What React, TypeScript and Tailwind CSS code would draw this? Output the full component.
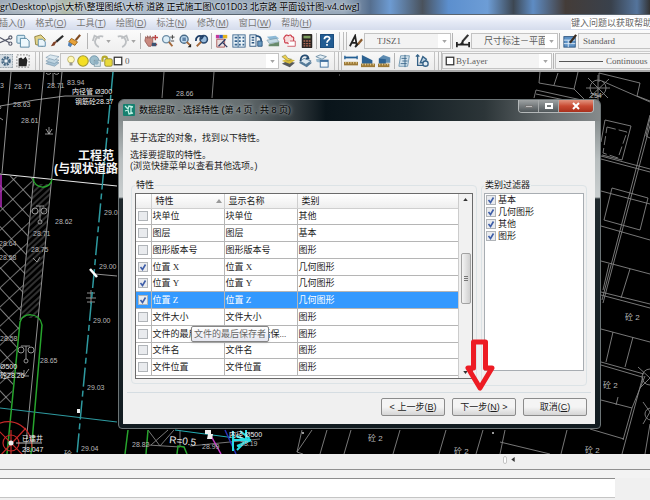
import React, { useState } from "react";

const cjk = 'font-["Liberation_Sans","Noto_Sans_CJK_SC",sans-serif]';

/* ---------- toolbar glyphs ---------- */

const glyphs: Record<string, React.ReactNode> = {
  cut: (
    <g fill="none" stroke="#55596a" strokeWidth="1.3">
      <path d="M1 4 L12 10 M1 10 L12 5" />
      <circle cx="13" cy="4" r="1.8" />
      <circle cx="13" cy="11" r="1.8" />
    </g>
  ),
  copy: (
    <g stroke="#4d7f9c" fill="#d7ecf6">
      <rect x="1" y="1.500" width="9" height="9" rx="1" />
      <path d="M5 5h7l3 3v7H5z" fill="#eef8fc" />
    </g>
  ),
  paste: (
    <g stroke="#8a7a35">
      <path d="M2 3l7-2 5 5-3 8-8-2z" fill="#e3d489" />
      <path d="M6 6h5l3 3v5H6z" fill="#eaf4fa" stroke="#5285a8" />
    </g>
  ),
  brush: (
    <g>
      <path d="M15 2L7 9" stroke="#2b2b2b" strokeWidth="2.500" />
      <path d="M8 8l-3 5-4 1 3-5z" fill="#7d3f25" />
    </g>
  ),
  match: (
    <g>
      <path d="M15 1l-5 6" stroke="#7e481e" strokeWidth="2.500" />
      <path d="M5 5l7 4-3 4-7-4z" fill="#e8a33a" stroke="#94601c" />
      <path d="M2 9l4 3-2 3-3-2z" fill="#4f80b8" />
    </g>
  ),
  undo: <path d="M9 15C5 13 3 9 6 5M2 8l2-6 6 3M6 5c2-2 5-3 8-2" fill="none" stroke="#bcbfc2" strokeWidth="2" />,
  redo: <path d="M7 15c4-2 6-6 3-10M14 8l-2-6-6 3M10 5C8 3 5 2 2 3" fill="none" stroke="#bcbfc2" strokeWidth="2" />,
  pan: (
    <g>
      <path d="M2 3l2 2 0-3 2 3 1-3 1 3 2-2v7l-2 4H5L1 8z" fill="#c9897f" stroke="#995e58" />
      <path d="M13 1v6M10 4h6M9 12h6" stroke="#b44" strokeWidth="1.500" />
      <rect x="9" y="10" width="5" height="4" fill="#3b5272" />
    </g>
  ),
  zoom: (
    <g fill="none">
      <circle cx="6" cy="6" r="4.200" stroke="#6c8ca5" strokeWidth="1.500" fill="#dcedf7" />
      <path d="M9 9l4 5" stroke="#a5693a" strokeWidth="2.200" />
      <path d="M13 1v5M10.500 3.500h5M11 8h4" stroke="#333" />
    </g>
  ),
  zoomWin: (
    <g fill="none">
      <circle cx="7" cy="6" r="4.600" stroke="#486a88" strokeWidth="1.500" fill="#bcd7ec" />
      <path d="M5 4h4v4H5z" fill="#5f83a8" />
      <path d="M10 9l4 4" stroke="#a5693a" strokeWidth="2.200" />
      <path d="M15 11v4h-4z" fill="#222" />
    </g>
  ),
  zoomPrev: (
    <g fill="none">
      <circle cx="10" cy="6" r="4.200" stroke="#2a4a70" strokeWidth="1.800" fill="#98bbdc" />
      <path d="M7 9l-5 5" stroke="#a5693a" strokeWidth="2.200" />
      <path d="M1 8c0-5 3-7 8-5l-2 3" stroke="#1e3e66" strokeWidth="2" />
    </g>
  ),
  props: (
    <g>
      <path d="M1 1h4v4H1z" fill="#c3379c" />
      <path d="M5 1h4v4H5z" fill="#2e59c8" />
      <path d="M9 1h5v4H9z" fill="#e2b321" />
      <path d="M2 6h9v9H2z" fill="#e9dede" stroke="#a55" />
      <path d="M4 14l8-8M8 9l6 6" stroke="#2b3a63" strokeWidth="1.500" />
    </g>
  ),
  design: (
    <g>
      <rect x="1" y="1" width="14" height="14" fill="#e9f2f8" stroke="#35628c" />
      <path d="M3 4h3M3 8h3M3 12h3M8 4h2M12 4h2M8 8h2M12 8h2M8 12h2M12 12h2" stroke="#35628c" strokeWidth="2" />
      <path d="M7 1v14" stroke="#35628c" />
    </g>
  ),
  palette: (
    <g>
      <rect x="1" y="1" width="7" height="13" fill="#eef5fa" stroke="#29527c" />
      <path d="M3 4h3M3 7h3M3 10h3" stroke="#29527c" strokeWidth="1.500" />
      <path d="M8 2c4 0 6 2 6 6" fill="none" stroke="#29527c" strokeWidth="2" />
      <path d="M10 8h5v6h-5z" fill="#6a9ac1" stroke="#29527c" />
    </g>
  ),
  sheets: (
    <g>
      <path d="M1 3l10-1 4 3-10 2z" fill="#8db9d6" />
      <path d="M1 7l11-2 3 4-11 2z" fill="#c4dae4" stroke="#68899a" strokeWidth=".6" />
      <path d="M3 12l12-3v5H3z" fill="#688a6b" />
    </g>
  ),
  markup: (
    <g>
      <path d="M2 3q2-3 4-1 3-2 4 1 3 0 2 4 1 4-3 3-2 3-4 0-4 1-3-3-2-2 0-4z" fill="#f6dcdc" stroke="#cd3e4c" strokeWidth="1.300" />
      <path d="M8 8h6v6H5" fill="#fff" stroke="#c9505c" />
    </g>
  ),
  calc: (
    <g>
      <rect x="2" y="0" width="12" height="16" rx="1" fill="#2a2523" />
      <rect x="4" y="2" width="8" height="3" fill="#7c9c5e" />
      <path d="M4 8h8M4 11h8M4 13.500h8" stroke="#b66b57" strokeWidth="1.500" strokeDasharray="2 1" />
    </g>
  ),
  help: (
    <g>
      <rect x="0" y="0" width="16" height="16" rx="1" fill="#225c92" stroke="#123c68" />
      <path d="M5 6c0-4 6-4 6-1 0 2-3 2-3 5M8 11.500v2" fill="none" stroke="#fff" strokeWidth="2" />
    </g>
  ),
  textStyle: (
    <g fill="none">
      <path d="M1 14L7 2l2 12M3 10h6" stroke="#222" strokeWidth="2" />
      <path d="M15 6l-5 6" stroke="#8a5a2c" strokeWidth="2.500" />
      <path d="M10 11l-3 4" stroke="#222" strokeWidth="2" />
    </g>
  ),
  dimStyle: (
    <g>
      <path d="M1 9v6M15 9v6M1 12h14" stroke="#222" strokeWidth="2" />
      <path d="M14 1L7 9" stroke="#333" strokeWidth="2.500" />
      <path d="M8 7l-4 5h5z" fill="#222" />
    </g>
  ),
  tableStyle: (
    <g>
      <rect x="1" y="3" width="13" height="12" fill="#5f93c7" stroke="#29527c" />
      <path d="M1 7h13M1 11h13M6 7v8" stroke="#e4eff8" />
      <path d="M15 1L8 10" stroke="#3a2c20" strokeWidth="2.500" />
    </g>
  ),
  gear: (
    <g>
      <rect x="0" y="0" width="16" height="16" fill="#d5dde3" stroke="#5d6a74" strokeDasharray="2 1" />
      <circle cx="8" cy="8" r="4" fill="none" stroke="#466884" strokeWidth="3" strokeDasharray="2.200 1" />
      <circle cx="8" cy="8" r="2.500" fill="#f0f5f8" stroke="#466884" />
    </g>
  ),
  region: (
    <g>
      <rect x="1" y="1" width="14" height="14" fill="none" stroke="#777" strokeDasharray="2 1.500" />
      <path d="M3 5l3-1 2 2 3-3 2 4-1 7H3z" fill="#242424" />
    </g>
  ),
  layers: (
    <g stroke="#6b8ba2" strokeWidth=".6">
      <path d="M1 11l5-3 10 2-5 4z" fill="#a6c2d4" />
      <path d="M1 8l5-3 10 2-5 4z" fill="#bed4e1" />
      <path d="M1 4l5-3 10 2-5 4z" fill="#dbe8f0" />
    </g>
  ),
  layerGold: (
    <g>
      <path d="M1 11l6-3 9 2-6 5z" fill="#55585a" />
      <path d="M1 8l6-3 9 2-6 4z" fill="#d8bc3c" />
      <path d="M1 3l4-2 3 4 4 1-4 2z" fill="#eecf4f" stroke="#72773b" strokeWidth=".6" />
    </g>
  ),
  layerBack: (
    <g>
      <path d="M1 10l6-3 9 3-6 5z" fill="#547997" />
      <path d="M2 8l5-3 8 3-6 4z" fill="#dde8ef" stroke="#547997" />
      <path d="M3 8c0-8 8-8 9-3l-3 0" fill="none" stroke="#274d73" strokeWidth="2" />
    </g>
  ),
  layerState: (
    <g>
      <path d="M1 3l5-2 7 2-5 3z" fill="#e2edf4" stroke="#6b8ba2" />
      <path d="M1 6l5-1 2 5-6-1z" fill="#99b9ce" />
      <rect x="6" y="7" width="9" height="8" fill="#f1f7fb" stroke="#376a9b" />
      <path d="M6 8h9" stroke="#376a9b" strokeWidth="2" />
    </g>
  ),
  distance: (
    <g>
      <path d="M1 4h14" stroke="#225e94" strokeWidth="2" />
      <path d="M1 2v4M15 2v4" stroke="#225e94" strokeWidth="1.500" />
      <rect x="0" y="9" width="16" height="4" fill="#9b7836" />
      <path d="M2 9v2M5 9v2M8 9v2M11 9v2M14 9v2" stroke="#f3dca0" />
    </g>
  ),
  area: (
    <g>
      <path d="M1 1l12 6v4H1z" fill="#2d6292" />
      <rect x="0" y="11" width="16" height="4" fill="#9b7836" />
      <path d="M2 11v2M5 11v2M8 11v2M11 11v2M14 11v2" stroke="#f3dca0" />
    </g>
  ),
  volume: (
    <g>
      <path d="M1 5l5-4 8 3v6H1z" fill="#5e8cb2" />
      <path d="M1 5l8 1v5H1z" fill="#2d6292" />
      <rect x="0" y="11" width="13" height="4" fill="#9b7836" />
      <path d="M2 11v2M5 11v2M8 11v2M11 11v2" stroke="#f3dca0" />
    </g>
  ),
  list: (
    <g>
      <path d="M3 2h10l-2 12H1z" fill="#d3e2ec" stroke="#6992ae" />
      <path d="M4 5h6M5 8h6M3 11h7M8 1v14" stroke="#356287" />
    </g>
  ),
  locate: (
    <g fill="none" stroke="#356287" strokeWidth="1.500">
      <path d="M3 1v12h12M1 3l2-2 2 2" />
      <path d="M6 10l3-7 4 3-2 4z" fill="#bcd3e4" />
      <circle cx="12" cy="11" r="3" fill="#e4eef5" />
    </g>
  ),
  bulb: (
    <g>
      <circle cx="8" cy="6" r="4.500" fill="#fff9b8" stroke="#b3a655" />
      <path d="M6 10h4v4H6z" fill="#9a9a94" />
    </g>
  ),
  sun: <circle cx="8" cy="8" r="7" fill="#f4df24" stroke="#a39a33" strokeWidth="1.500" />,
  freeze: (
    <g>
      <circle cx="7" cy="7" r="6" fill="#9ebfcd" stroke="#648ba0" />
      <rect x="7" y="7" width="8" height="8" fill="#dae6ea" stroke="#7593a0" />
      <circle cx="10" cy="10" r="3" fill="#8eb0c2" />
    </g>
  ),
  lock: (
    <g>
      <path d="M2 9V5c0-4 6-4 6 0" fill="none" stroke="#b5a92c" strokeWidth="3" />
      <rect x="5" y="5" width="10" height="10" rx="2" fill="#e8d93a" stroke="#817a2c" />
    </g>
  ),
  swatch: <rect x="2" y="2" width="12" height="12" fill="#fff" stroke="#333" strokeWidth="2" />,
};

function Glyph({ name, size = "size-3.5" }: { name: string; size?: string }) {
  return (
    <svg viewBox="0 0 16 16" className={`${size} shrink-0`} aria-hidden="true">
      {glyphs[name]}
    </svg>
  );
}

function Tool({ name, label }: { name: string; label: string }) {
  return (
    <button type="button" aria-label={label} className="flex h-4 w-[17px] shrink-0 items-center justify-center">
      <Glyph name={name} />
    </button>
  );
}

function Caret() {
  return (
    <svg viewBox="0 0 6 4" className="h-[3px] w-[5px] shrink-0" aria-hidden="true">
      <path d="M0 0h6L3 4z" fill="#a5a5a5" />
    </svg>
  );
}

function HistoryTool({ name, label }: { name: string; label: string }) {
  return (
    <div className="flex w-[25px] shrink-0 items-center">
      <Tool name={name} label={label} />
      <Caret />
    </div>
  );
}

const Sep = () => <span className="mx-px h-4 w-px shrink-0 bg-[#b4b4b4]" />;

const Grip = () => (
  <span className="ml-1 flex h-[18px] shrink-0 gap-0.5 border-l border-[#c4c4c4] pl-[3px]">
    <span className="w-px bg-[#bdbdbd]" />
    <span className="w-px bg-[#bdbdbd]" />
  </span>
);

function Combo({ label, value, width, pad, children }: { label: string; value: string; width: string; pad: string; children?: React.ReactNode }) {
  return (
    <div className={`grid h-4 items-center border border-[#c3c3c3] bg-[#f3f3f3] ${width}`}>
      <select
        aria-label={label}
        className={`col-start-1 row-start-1 h-full w-full min-w-0 appearance-none bg-transparent font-["Liberation_Serif","Noto_Sans_CJK_SC",serif] text-[9px] leading-3 text-[#5c5c5c] ${pad}`}
      >
        <option>{value}</option>
      </select>
      <div className="pointer-events-none col-start-1 row-start-1 flex h-full items-center pl-1">
        {children}
        <span className="ml-auto flex h-full w-3 items-center justify-center bg-white">
          <Caret />
        </span>
      </div>
    </div>
  );
}

/* ---------- drawing area ---------- */

const streetLines = [
  "M540 72L539 83L574 89L578 72M558 73L554 85M574 89L588 103M536 90L600 104M536 90L534 98M536 94L598 107",
  "M599 73L640 83L637 96L650 101M602 81L650 102M599 73V82M650 118L646 136L650 138",
  "M605 120L631 126L622 160L602 155M605 120L601 142",
  "M601 156L650 169M601 159L650 172M650 115L602 300M652 118L603 303",
  "M612 188L648 198L640 230L604 220ZM601 191L650 204M601 226L650 240",
  "M601 261L650 274M630 269L621 298M601 292L650 304M601 295L650 308M609 264L603 290",
  "M601 329L650 342M613 332L606 362M633 337L625 367M601 362L644 374M601 365L642 377",
  "M601 400L632 408M618 397L616 405M643 376L622 454M645 376L632 408M590 429L624 439M632 408L623 440",
  "M483 430L476 454M505 430L500 454M500 442L550 454M567 430L561 454M650 424L645 454",
];

const lowerLines = [
  "M302 430L297 452L312 430M297 452L303 454M327 430L320 454M351 430L344 454M400 430L393 454M446 430L439 454",
  "M148 430L160 446L174 430M168 430L151 445M148 445L180 447M180 430V446M190 446L260 439",
];

const spots: [number, number, string][] = [
  [-4, 88, "13"], [14, 89, "28.71"], [47, 88, "28.71"], [67, 85, "83.94"], [13, 107, "28.63"], [21, 123, "28.61"],
  [55, 224, "28.62"], [104, 215, "29.03"], [99, 269, "29.00"], [93, 323, "29.00"], [40, 363, "28.65"],
  [87, 390, "29.03"], [81, 451, "29.04"], [-1, 246, "28.64"], [-1, 260, "28.58"], [33, 236, "28.71"],
  [31, 252, "28.75"], [0, 341, "28.58"], [176, 96, "28.66"], [132, 447, "28.82"], [202, 449, "28.99"], [240, 446, "28.19"],
];

function Drawing() {
  return (
    <svg
      viewBox="0 72 650 382"
      preserveAspectRatio="xMinYMin slice"
      className='absolute inset-0 h-full w-full font-["Liberation_Sans","Noto_Sans_CJK_SC",sans-serif]'
      aria-hidden="true"
    >
      <defs>
        <pattern id="cross" width="14" height="14" patternUnits="userSpaceOnUse" patternTransform="rotate(47)">
          <path d="M0 0H14M0 0V14" stroke="#a8a8a8" strokeWidth="1.300" />
        </pattern>
        <pattern id="slant" width="9" height="9" patternUnits="userSpaceOnUse" patternTransform="rotate(-43)">
          <path d="M0 1H9M0 5H9" stroke="#8a8a8a" strokeWidth=".7" />
        </pattern>
      </defs>
      <path d="M0 175L33 178L20 320L11 404L0 404Z" fill="url(#cross)" />
      <path d="M33 184L51 184L38 318L21 318Z" fill="url(#slant)" />

      <g fill="none" stroke="#b5b5b5" strokeWidth=".8">
        <path d="M11 72L2 173M44 72L20 320M62 72L25 454M0 106L35 100L65 96H103" />
        <path d="M46 73a3 3 0 0 0 5 0M54 73a3 3 0 0 0 5 0M53 73V85M0 106a2 2 0 0 1 0 3M0 118l3 2" />
        <path d="M45 134H53M49 127V134M46 129L49 134L52 129" />
        <circle cx="35" cy="211" r="3" />
        <circle cx="44" cy="211" r="3" />
        <path d="M36 206H44M40 206V220M33 258l4 4 3-5" />
        <circle cx="40" cy="222" r="2" />
        <circle cx="21" cy="350" r="3" />
        <circle cx="31" cy="350" r="3" />
        <path d="M21 346H30M26 346V359M0 373H22M24 370V376H29M24 376L29 369" />
        <circle cx="26" cy="361" r="2" />
        <path d="M87 293H95M86 298H96M87 302H95M91 290V304" />
        <path d="M95 274L117 276" />
      </g>
      <path d="M0 174L117 186" stroke="#e7e7e7" />
      <path d="M1 175V207" stroke="#b42bbc" strokeWidth="1.500" />
      <path d="M113 72L77 454" stroke="#2e9aa0" strokeWidth="1.500" strokeDasharray="19 4 6 4" />
      <path d="M0 408L117 422" stroke="#2e9aa0" strokeWidth="1.200" />
      <path d="M33 178C34 190 51 190 52 179M7 454L20 322C22 312 40 312 42 325L31 454" fill="none" stroke="#27a52d" strokeWidth="1.500" />
      <g fill="none" stroke="#c62828" strokeWidth="1.200">
        <circle cx="11" cy="443" r="8" />
        <path d="M-5 425C14 416 32 427 32 448M-4 428L26 458M26 428L-2 458M11 430V454" />
      </g>
      <circle cx="11" cy="443" r="2.500" fill="#eee" />
      <path d="M16 443H42" stroke="#bbb" />
      <path d="M90 269L97 277" stroke="#fff" strokeWidth="2.500" />
      <path d="M77 409h3v4h-3z" fill="#eee" />

      <g fill="none" stroke="#858585" strokeWidth=".9">
        {[...streetLines, ...lowerLines].map((d) => (
          <path key={d} d={d} />
        ))}
        <path d="M164 72L162 98M214 72L212 98M339 75h1" />
        <path d="M607 127L627 132L618 158L603 153Z" strokeDasharray="9 3" />
        <circle cx="598" cy="88" r="8" />
        <path d="M588 78L608 98M609 79L589 98M598 75V102M586 88H610" />
        <circle cx="650" cy="377" r="8" />
        <circle cx="651" cy="414" r="6" />
        <path d="M638 367L650 378L640 388M643 402L650 412L643 424" />
      </g>
      <circle cx="493" cy="433" r="1" fill="#ccc" />
      <circle cx="303" cy="433" r="1" fill="#ccc" />

      <path d="M128 430L125 454M148 430L146 454M177 454L178 446L184 447L187 454" fill="none" stroke="#27a52d" strokeWidth="1.500" />
      <path d="M175 430L235 438" stroke="#25aeb4" />
      <path d="M210 434L221 454" stroke="#c63cc8" strokeWidth="1.500" />
      <path d="M225 430L236 454" stroke="#2731b8" strokeWidth="1.500" />
      <path d="M205 430h6v4h-6zM208 434h5l-1 5h-5z" fill="#eee" />
      <path d="M233 431v20M233 440h18M240 431l9 7-11 9M236 436l13 5-12 5M246 430v12M237 450l11-11" stroke="#27dce4" strokeWidth="2" fill="none" />

      <g fill="#b9b9b9" fontSize="7">
        {spots.map(([x, y, t]) => (
          <text key={`${x}-${y}`} x={x} y={y}>{t}</text>
        ))}
        <text x="590" y="98">254</text>
      </g>
      <g fill="#f2f2f2" fontSize="7">
        <text x="72" y="94">内径管 Ø300</text>
        <text x="75" y="104">钢筋砼28.37</text>
        <text x="0" y="369">Ø500</text>
        <text x="0" y="378">砼28.26</text>
        <text x="22" y="441">已建井</text>
        <text x="22" y="452">28.047</text>
        <text x="229" y="437">内径 Ø500</text>
      </g>
      <g fill="#bdbdbd" fontSize="8">
        <text x="625" y="320">砼 2</text>
        <text x="603" y="388">砼 2</text>
        <text x="585" y="453">砼 2</text>
        <text x="368" y="441">砼 2</text>
        <text x="454" y="454">砼 2</text>
        <text x="64" y="457">砼</text>
      </g>
      <text x="169" y="443" fill="#ececec" fontSize="10" transform="rotate(6 169 443)">R=0.5</text>
      <g fill="#f5f5f5" fontSize="12" fontWeight="700">
        <text x="78" y="160">工程范</text>
        <text x="54" y="173">(与现状道路</text>
      </g>
    </svg>
  );
}

/* ---------- wizard ---------- */

function Tick({ checked, onChange, label, id }: { checked: boolean; onChange: () => void; label?: string; id?: string }) {
  return (
    <span className="inline-grid shrink-0 align-middle">
      <input
        id={id}
        type="checkbox"
        checked={checked}
        onChange={onChange}
        aria-label={label}
        className="col-start-1 row-start-1 size-2.5 appearance-none border border-[#b0b4b8] bg-[#e9ebee]"
      />
      {checked && (
        <svg viewBox="0 0 10 10" className="pointer-events-none col-start-1 row-start-1 size-2.5" aria-hidden="true">
          <path d="M2.500 5L4.500 7.500L7.500 2.500" fill="none" stroke="#3e5ea8" strokeWidth="1.600" />
        </svg>
      )}
    </span>
  );
}

const initialRows = [
  { name: "块单位", kind: "其他", on: false },
  { name: "图层", kind: "基本", on: false },
  { name: "图形版本号", kind: "图形", on: false },
  { name: "位置 X", kind: "几何图形", on: true },
  { name: "位置 Y", kind: "几何图形", on: true },
  { name: "位置 Z", kind: "几何图形", on: true },
  { name: "文件大小", kind: "图形", on: false },
  { name: "文件的最后保存者", display: "文件的最后保...", kind: "图形", on: false },
  { name: "文件名", kind: "图形", on: false },
  { name: "文件位置", kind: "图形", on: false },
];

function PropertyTable() {
  const [rows, setRows] = useState(initialRows);
  const toggle = (i: number) => setRows(rows.map((r, j) => (j === i ? { ...r, on: !r.on } : r)));
  return (
    <div className="flex h-[186px] overflow-hidden border border-[#6a6a6a] bg-white">
      <div className="min-w-0 flex-1 overflow-hidden">
        <table className='h-[182px] w-full table-fixed border-collapse text-left font-["Liberation_Serif","Noto_Sans_CJK_SC",serif]'>
          <colgroup>
            <col className="w-[15px]" />
            <col className="w-[73px]" />
            <col className="w-[73px]" />
            <col />
          </colgroup>
          <thead>
            <tr className="h-3.5 bg-linear-to-b from-white to-[#eeeeee]">
              <th className="border-r border-b border-[#cfcfcf] p-0" />
              <th className="border-r border-b border-[#cfcfcf] p-0 pl-1 font-normal">
                <span className="flex items-center justify-between pr-0.5">
                  特性
                  <svg viewBox="0 0 6 4" className="h-1 w-1.5" aria-hidden="true">
                    <path d="M0 4h6L3 0z" fill="#9a9a9a" />
                  </svg>
                </span>
              </th>
              <th className="border-r border-b border-[#cfcfcf] p-0 pl-1 font-normal">显示名称</th>
              <th className="border-b border-[#cfcfcf] p-0 pl-1 font-normal">类别</th>
            </tr>
          </thead>
          <tbody>
            {rows.map((r, i) => (
              <tr key={r.name} className={i === 5 ? "bg-[#3399ff] text-white" : ""}>
                <td className="border-r border-b border-[#b5b5b5] p-0 text-center leading-none">
                  <Tick checked={r.on} onChange={() => toggle(i)} label={r.name} />
                </td>
                <td className="overflow-hidden border-r border-b border-[#b5b5b5] p-0 pl-px whitespace-nowrap">{r.name}</td>
                <td className="overflow-hidden border-r border-b border-[#b5b5b5] p-0 pl-px whitespace-nowrap">{r.display ?? r.name}</td>
                <td className="border-b border-[#b5b5b5] p-0 pl-px">{r.kind}</td>
              </tr>
            ))}
          </tbody>
        </table>
      </div>
      <div className="flex w-3.5 flex-col items-center border-l border-[#cccccc] bg-[#f1f1f1] py-1">
        <svg viewBox="0 0 6 4" className="h-[3px] w-[5px] shrink-0" aria-hidden="true">
          <path d="M0 4h6L3 0z" fill="#333" />
        </svg>
        <div className="mt-[52px] flex h-[51px] w-2.5 flex-col items-center justify-center gap-px rounded-xs border border-[#a2a2a2] bg-linear-to-r from-[#f4f4f4] to-[#cfcfcf]">
          <span className="h-px w-1 bg-[#777]" />
          <span className="h-px w-1 bg-[#777]" />
          <span className="h-px w-1 bg-[#777]" />
        </div>
        <svg viewBox="0 0 6 4" className="mt-auto h-[3px] w-[5px] shrink-0" aria-hidden="true">
          <path d="M0 0h6L3 4z" fill="#333" />
        </svg>
      </div>
    </div>
  );
}

function CategoryFilter() {
  const names = ["基本", "几何图形", "其他", "图形"];
  const [off, setOff] = useState<string[]>([]);
  return (
    <div className="h-[178px] border border-[#a8adb2] bg-white px-px">
      {names.map((n, i) => (
        <div key={n} className="flex h-3 items-center gap-0.5">
          <Tick
            id={`category-${i}`}
            checked={!off.includes(n)}
            onChange={() => setOff(off.includes(n) ? off.filter((o) => o !== n) : [...off, n])}
          />
          <label htmlFor={`category-${i}`}>{n}</label>
        </div>
      ))}
    </div>
  );
}

function WizardButton({ children }: { children: React.ReactNode }) {
  return (
    <button
      type="button"
      className="flex h-[18px] w-16 items-center justify-center rounded-xs border border-[#8b8b8b] bg-linear-to-b from-[#f4f4f4] from-50% to-[#d5d5d5] whitespace-pre"
    >
      {children}
    </button>
  );
}

function Wizard() {
  return (
    <section
      aria-label="数据提取"
      className={`absolute top-[27px] left-[118px] w-[483px] rounded-t-md rounded-b-sm border border-[#6c7476] bg-[linear-gradient(180deg,#6f7677_0px,#b8bebf_60px,#c9cecf_97px,#20292d_99px,#121c21_100%)] pr-[5px] pb-1 pl-1 text-[9px] leading-3 text-[#1c1c1c] ${cjk}`}
    >
      <header className="-mr-[5px] -ml-1 flex h-[21px] items-start rounded-t-md bg-[linear-gradient(90deg,#858c8d_0%,#687072_25%,#343c40_36%,#09141a_43%,#141f24_60%,#2c3538_76%,#686e70_90%,#858a8b_100%)] pr-1.5 pl-1">
        <svg viewBox="0 0 12 12" className="mt-1 size-3" aria-hidden="true">
          <rect width="12" height="12" rx="1" fill="#16806f" />
          <path d="M2 2l3 3 1-3 4 1M2 7l3-1 1 4 4-1M8 3v6" fill="none" stroke="#bdf0e3" strokeWidth="1.300" />
        </svg>
        <h1 className="mt-1 ml-1 text-black [text-shadow:0_0_3px_#a9afb0,0_0_5px_#a9afb0]">数据提取 - 选择特性 (第 4 页 , 共 8 页)</h1>
        <div className="ml-auto flex h-[13px] overflow-hidden rounded-b-sm border border-t-0 border-[#b5b9ba]">
          <button type="button" aria-label="最小化" className="flex w-5 items-center justify-center border-r border-[#a5a9aa] bg-linear-to-b from-[#9fa3a4] to-[#50575a]">
            <span className="h-[3px] w-2 border border-[#777] bg-[#bdbdbd]" />
          </button>
          <button type="button" aria-label="最大化" className="flex w-5 items-center justify-center border-r border-[#a5a9aa] bg-linear-to-b from-[#9fa3a4] to-[#50575a]">
            <span className="h-1.5 w-2 border-2 border-white" />
          </button>
          <button type="button" aria-label="关闭" className="flex w-[34px] items-center justify-center bg-linear-to-b from-[#e0937f] via-[#c94a32] to-[#a8301c]">
            <svg viewBox="0 0 8 8" className="size-2" aria-hidden="true">
              <path d="M1 1l6 6M7 1L1 7" stroke="#fff" strokeWidth="2" />
            </svg>
          </button>
        </div>
      </header>

      <div className="bg-[#f0f0f0] pb-2">
        <div className="px-[7px] pt-[11px]">
          <p>基于选定的对象，找到以下特性。</p>
          <p className="mt-1.5 leading-[11px]">选择要提取的特性。</p>
          <p className="leading-[11px]">(浏览快捷菜单以查看其他选项。)</p>
        </div>

        <div className="mt-[7px] flex items-start gap-1 pr-2 pl-2">
          <fieldset className="min-w-0 flex-1 rounded-sm border border-[#dce3e6] px-[3px] pb-1">
            <legend className="px-px">特性</legend>
            <div className="pt-0.5">
              <PropertyTable />
            </div>
          </fieldset>
          <fieldset className="h-[207px] w-[106px] rounded-sm border border-[#dce3e6] px-0.5">
            <legend className="px-px">类别过滤器</legend>
            <div className="pt-0.5">
              <CategoryFilter />
            </div>
          </fieldset>
        </div>

        <div className="mx-1 mt-1.5 border-t border-[#d5dde2]" />
        <div className="mt-[5px] flex justify-end gap-[7px] pr-2">
          <WizardButton>{"< "}上一步(<u>B</u>)</WizardButton>
          <WizardButton>下一步(<u>N</u>){" >"}</WizardButton>
          <WizardButton>取消(<u>C</u>)</WizardButton>
        </div>
      </div>

      <div role="tooltip" className="absolute top-[226px] left-[72px] rounded-xs border border-[#858585] bg-linear-to-b from-white to-[#e6e7f0] px-0.5 py-px text-[#666] shadow-sm">
        文件的最后保存者
      </div>
      <svg viewBox="0 0 32 54" className="pointer-events-none absolute top-[239px] left-[344px] h-[54px] w-8" aria-hidden="true">
        <path d="M10.500 3H22.500V29H29L17 49L5 29H10.500Z" fill="none" stroke="#ed1c24" strokeWidth="5" strokeLinejoin="round" />
      </svg>
    </section>
  );
}

/* ---------- application frame ---------- */

const menus: [string, string][] = [
  ["插入", "I"], ["格式", "O"], ["工具", "T"], ["绘图", "D"], ["标注", "N"], ["修改", "M"], ["窗口", "W"], ["帮助", "H"],
];

export default function App() {
  return (
    <main className={`flex min-h-screen flex-col overflow-hidden bg-[#f0f0f0] text-[9px] leading-3 ${cjk}`}>
      <div className="h-[15px] overflow-hidden border-b border-[#59646f] bg-[linear-gradient(90deg,#9eabb9_0%,#b9c3ca_8%,#aeb9a8_10%,#b4c1d0_14%,#a3b3c5_30%,#9aa9b9_42%,#98a9bb_53%,#566f8f_57%,#6d9bd2_60%,#4a525c_65%,#5c8fce_69%,#6d9dd6_75%,#3d4752_79%,#5e8cc4_82%,#443c38_87%,#39414c_94%,#54749c_98%,#333_100%)]">
        <h2 className="pt-px font-['Open_Sans','Noto_Sans_CJK_SC',sans-serif] whitespace-nowrap text-black [text-shadow:0_0_3px_#fff]">
          gr\Desktop\pjs\大桥\整理图纸\大桥 道路 正式施工图\C01D03 北京路 平面设计图-v4.dwg]
        </h2>
      </div>

      <nav className="flex h-[15px] items-center bg-linear-to-b from-[#fafbfe] via-[#e4e9f5] to-[#d5dcec] text-[#777]">
        <div className="-ml-px flex gap-2.5">
          {menus.map(([name, key]) => (
            <button key={key} type="button" className="whitespace-nowrap">
              {name}(<u>{key}</u>)
            </button>
          ))}
        </div>
        <input
          aria-label="帮助搜索"
          defaultValue="键入问题以获取帮助"
          className="ml-auto h-3 w-[79px] min-w-0 bg-white text-[#666]"
        />
      </nav>

      <div className="flex h-[22px] items-center overflow-hidden border-b border-[#cccccc] bg-linear-to-b from-[#fbfbfb] to-[#efefef] pt-px">
        <div className="-ml-[3px] flex shrink-0 items-center">
          <Tool name="cut" label="剪切" />
          <Tool name="copy" label="复制" />
          <Tool name="paste" label="粘贴" />
          <Tool name="brush" label="特性匹配" />
          <Tool name="match" label="块编辑器" />
          <span className="w-1" />
          <Sep />
          <HistoryTool name="undo" label="放弃" />
          <HistoryTool name="redo" label="重做" />
          <Sep />
          <Tool name="pan" label="平移" />
          <Tool name="zoom" label="实时缩放" />
          <Tool name="zoomWin" label="窗口缩放" />
          <Tool name="zoomPrev" label="缩放上一个" />
          <Sep />
          <Tool name="props" label="特性" />
          <Tool name="design" label="设计中心" />
          <Tool name="palette" label="工具选项板" />
          <Tool name="sheets" label="图纸集" />
          <Tool name="markup" label="标记集" />
          <Tool name="calc" label="计算器" />
          <Sep />
          <Tool name="help" label="帮助" />
        </div>
        <Grip />
        <Tool name="textStyle" label="文字样式" />
        <Combo label="文字样式" value="TJSZ1" width="w-[87px] shrink-0" pad="pl-3" />
        <Sep />
        <Tool name="dimStyle" label="标注样式" />
        <Combo label="标注样式" value="尺寸标注－平面" width="w-[87px] shrink-0" pad="pl-3" />
        <Sep />
        <Tool name="tableStyle" label="表格样式" />
        <Combo label="表格样式" value="Standard" width="min-w-[90px] flex-1" pad="pl-1" />
      </div>

      <div className="flex h-5 items-center overflow-hidden border-b-2 border-[#a9a9a9] bg-linear-to-b from-[#f8f8f8] to-[#ececec]">
        <div className="-ml-[3px] flex shrink-0 items-center">
          <Tool name="gear" label="工作空间设置" />
          <Tool name="region" label="我的工作空间" />
        </div>
        <Grip />
        <span className="w-1.5" />
        <Tool name="layers" label="图层特性" />
        <Combo label="图层" value="0" width="w-[219px] shrink-0" pad="pl-16">
          <span className="flex items-center">
            <Glyph name="bulb" size="size-3" />
            <Glyph name="sun" size="size-3" />
            <Glyph name="freeze" size="size-3" />
            <Glyph name="lock" size="size-3" />
            <Glyph name="swatch" size="size-2.5" />
          </span>
        </Combo>
        <Tool name="layerGold" label="置为当前" />
        <Tool name="layerBack" label="上一个图层" />
        <Tool name="layerState" label="图层状态" />
        <Grip />
        <Tool name="distance" label="距离" />
        <Tool name="area" label="面积" />
        <Tool name="volume" label="体积" />
        <Sep />
        <Tool name="list" label="列表" />
        <Tool name="locate" label="定位点" />
        <Grip />
        <span className="w-1" />
        <Combo label="颜色" value="ByLayer" width="w-[110px] shrink-0" pad="pl-[13px]">
          <Glyph name="swatch" size="size-2.5 -ml-0.5" />
        </Combo>
        <Sep />
        <Combo label="线型" value="Continuous" width="min-w-[110px] flex-1" pad="pl-[50px]">
          <span className="h-px w-11 -ml-px bg-[#555]" />
        </Combo>
      </div>

      <div className="relative min-h-[382px] flex-1 overflow-hidden bg-black">
        <Drawing />
        <Wizard />
      </div>

      <footer>
        <div className="flex h-4 items-start border-b border-[#909090] bg-[#f0f0f0] pl-[503px]">
          <span className="mt-0.5 h-2 w-1 rounded-xs border border-[#c4c4c4] bg-white" />
          <svg viewBox="0 0 4 6" className="mt-[3px] ml-1 h-[5px] w-1" aria-hidden="true">
            <path d="M4 0v6L0 3z" fill="#333" />
          </svg>
        </div>
        <div className="h-2 bg-[#f3f3f3]" />
        <div className="flex h-[22px] pb-0.5">
          <input aria-label="命令行" className="min-w-0 flex-1 border-t border-b border-t-[#8d8d8d] border-b-[#c5c5c5] bg-white" />
          <span className="w-[35px] bg-[#f0f0f0]" />
        </div>
      </footer>
    </main>
  );
}
